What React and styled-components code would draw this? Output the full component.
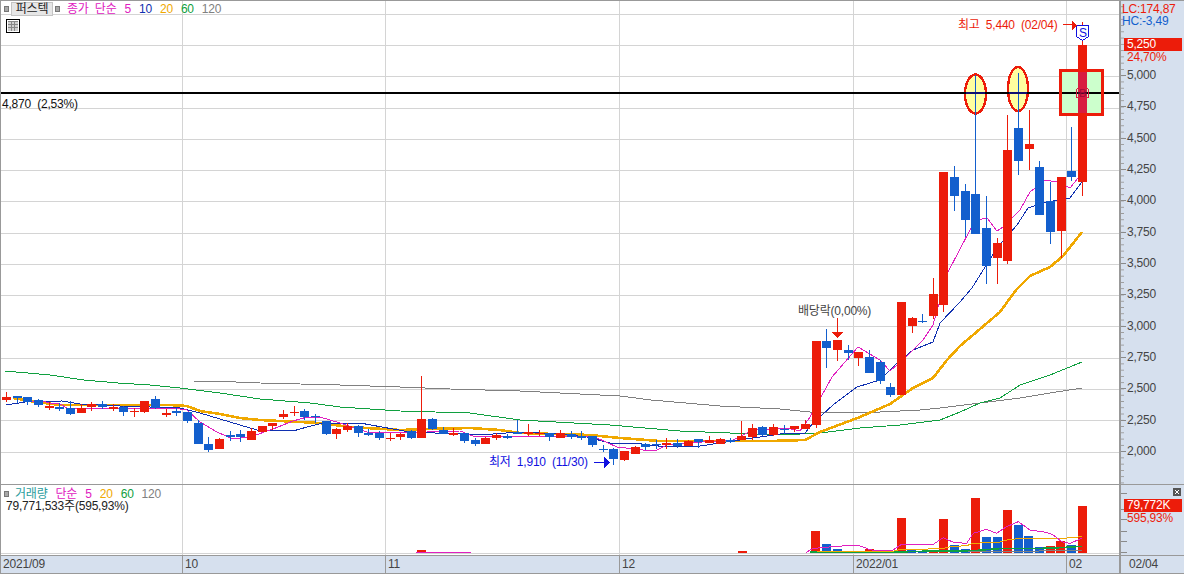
import React from "react"
import styled, { createGlobalStyle } from "styled-components"

const GRAY_LINE = "#999"
const GRID = "#d4d4d4"
const AXIS_BG = "#d6e0ee"
const RED = "#ec1c0a"
const BLUE = "#135fcd"
const MA = { m5: "#e020c0", m10: "#1030b0", m20: "#f0a800", m60: "#10a040", m120: "#808080" }

const candleX = (i) => Math.round(6 + i * 10.653)

// [colour, body top, body bottom, wick top, wick bottom] in page pixels
const candles = [
  ["r", 397, 400, 392, 402], ["b", 396, 398, 396, 403], ["b", 397, 402, 397, 405], ["b", 400, 405, 399, 407],
  ["r", 406, 408, 402, 410], ["b", 407, 409, 403, 411], ["b", 408, 414, 401, 415], ["r", 408, 413, 404, 413],
  ["r", 404, 407, 402, 411], ["b", 404, 407, 401, 409], ["r", 407, 409, 404, 411], ["b", 407, 412, 406, 416],
  ["r", 411, 412, 408, 417], ["r", 401, 412, 401, 413], ["b", 399, 408, 396, 409], ["r", 413, 415, 409, 417],
  ["b", 411, 413, 408, 416], ["b", 412, 421, 412, 423], ["b", 423, 444, 420, 444], ["b", 444, 450, 437, 452],
  ["r", 439, 449, 438, 449], ["b", 435, 437, 431, 441], ["b", 434, 437, 430, 442], ["r", 431, 440, 428, 440],
  ["r", 426, 432, 426, 432], ["r", 423, 426, 423, 430], ["r", 414, 417, 410, 419], ["r", 412, 413, 406, 416],
  ["b", 411, 417, 409, 420], ["b", 416, 417, 414, 423], ["b", 421, 434, 421, 435], ["r", 429, 434, 428, 439],
  ["r", 426, 430, 423, 432], ["b", 426, 433, 425, 437], ["b", 433, 435, 429, 436], ["b", 433, 438, 431, 440],
  ["r", 438, 439, 433, 441], ["r", 434, 437, 433, 440], ["b", 431, 438, 430, 439], ["r", 419, 438, 376, 438],
  ["b", 419, 429, 418, 430], ["b", 430, 434, 427, 434], ["r", 433, 435, 428, 436], ["b", 433, 441, 433, 443],
  ["b", 440, 444, 438, 446], ["r", 438, 444, 437, 444], ["r", 435, 438, 433, 440], ["b", 436, 438, 434, 439],
  ["b", 432, 434, 420, 434], ["r", 432, 434, 424, 436], ["r", 433, 434, 430, 436], ["b", 433, 437, 433, 441],
  ["r", 433, 438, 430, 438], ["b", 434, 437, 431, 439], ["b", 436, 438, 431, 440], ["b", 436, 445, 436, 447],
  ["b", 449, 450, 445, 452], ["b", 449, 459, 448, 465], ["r", 451, 460, 451, 461], ["r", 447, 454, 446, 454],
  ["b", 444, 447, 443, 450], ["b", 444, 445, 440, 449], ["r", 443, 445, 438, 449], ["b", 443, 446, 439, 448],
  ["r", 441, 446, 440, 446], ["b", 439, 442, 439, 448], ["r", 440, 443, 436, 443], ["r", 439, 444, 438, 444],
  ["b", 440, 442, 438, 443], ["r", 436, 440, 421, 440], ["r", 428, 437, 424, 440], ["b", 427, 435, 426, 436],
  ["r", 427, 435, 424, 436], ["b", 429, 430, 425, 434], ["r", 426, 429, 426, 432], ["r", 424, 429, 420, 429],
  ["r", 341, 425, 341, 428], ["b", 341, 348, 329, 368], ["r", 340, 350, 340, 361], ["b", 350, 353, 345, 360],
  ["r", 352, 358, 352, 366], ["b", 357, 373, 350, 373], ["b", 362, 381, 360, 384], ["b", 387, 395, 383, 397],
  ["r", 302, 395, 302, 395], ["r", 318, 326, 317, 333], ["b", 321, 322, 314, 323], ["r", 294, 316, 278, 319],
  ["r", 172, 305, 172, 312], ["b", 177, 196, 166, 211], ["b", 191, 220, 184, 237], ["b", 194, 234, 75, 234],
  ["b", 228, 266, 196, 284], ["r", 243, 258, 238, 284], ["r", 150, 261, 115, 264], ["b", 128, 161, 73, 175],
  ["r", 144, 149, 110, 170], ["b", 167, 215, 161, 215], ["b", 201, 232, 182, 244], ["r", 177, 231, 177, 258],
  ["b", 171, 177, 127, 181], ["r", 45, 182, 22, 196],
]

const line120 = "193,381 236,382 260,383 300,384 340,385 400,387 450,389 520,391 560,393 620,396 651,400 720,406 780,409 810,412 880,412 920,410 940,408 980,403 1020,398 1050,393 1082,388"
const line60 = "5,371 50,375 84,380 118,383 150,385 180,388 220,393 260,399 310,403 340,407 400,411 470,413 520,420 610,425 680,431 730,433 780,435 820,433 860,428 900,425 940,420 960,412 980,403 1000,398 1020,385 1050,375 1082,362"
const line20 = "13,398 30,401 60,405 100,405 170,405 187,406 200,411 220,414 240,418 260,420 320,423 350,427 400,430 430,429 470,428 500,430 520,433 590,435 620,438 660,441 720,441 770,441 805,440 820,432 860,417 890,404 913,388 933,378 947,360 960,346 980,329 1000,312 1016,290 1030,276 1050,267 1063,256 1082,232"
const line10 = "6,405 25,402 62,401 80,404 120,406 180,408 200,413 220,419 240,425 257,430 293,431 307,427 323,423 360,423 393,429 410,432 460,434 493,434 520,432 560,434 587,437 610,443 633,443 667,447 700,446 733,441 780,434 805,433 813,423 833,405 857,387 880,380 895,365 913,350 933,342 940,323 960,302 972,288 997,248 1017,225 1028,208 1047,202 1070,198 1082,182"
const line5 = "32,401 42,401 50,403 60,404 67,408 107,408 180,409 187,410 200,422 217,432 233,439 250,437 273,429 293,421 307,417 320,417 340,423 367,432 393,433 427,432 460,431 473,436 520,436 590,436 597,438 617,447 643,450 657,450 667,445 687,443 733,440 753,430 787,428 800,431 810,417 832,377 858,347 880,360 890,371 897,365 907,356 923,340 933,325 948,272 970,230 977,220 987,218 997,231 1003,227 1020,210 1030,192 1045,180 1057,182 1070,188 1082,173"

const gridRows = [14, 45, 76, 108, 139, 170, 201, 233, 264, 295, 326, 358, 389, 420, 452]
const gridCols = [182, 385, 619, 853, 1066]

// left edge, top of bar; baseline 553
const volumes = [
  ["r", 2, 553], ["r", 417, 550], ["r", 738, 551], ["r", 811, 531], ["b", 822, 544], ["b", 833, 549], ["r", 865, 549],
  ["r", 897, 518], ["b", 907, 550], ["b", 918, 552], ["r", 929, 550], ["r", 939, 519], ["b", 950, 545], ["b", 961, 549],
  ["r", 971, 498], ["b", 982, 537], ["b", 993, 537], ["r", 1003, 510], ["b", 1014, 525], ["b", 1024, 536],
  ["b", 1035, 547], ["r", 1046, 546], ["r", 1056, 541], ["b", 1067, 545], ["r", 1078, 506],
]

const volZoom = (pts) => pts.map(([x, y]) => `${800 + x / 3},${480 + y / 3}`).join(" ")
const volM5 = volZoom([[18, 218], [35, 207], [60, 203], [125, 198], [175, 196], [205, 207], [225, 212], [275, 213], [305, 193], [400, 193], [430, 173], [460, 187], [500, 190], [520, 160], [560, 148], [590, 160], [620, 140], [655, 125], [690, 150], [740, 157], [760, 165], [785, 185], [810, 190], [845, 175]])
const volM20 = volZoom([[50, 216], [280, 214], [300, 208], [380, 208], [390, 205], [430, 205], [450, 200], [500, 197], [520, 190], [600, 186], [620, 180], [660, 175], [720, 177], [790, 175], [845, 170]])
const volM60 = volZoom([[30, 216], [290, 216], [400, 213], [520, 212], [600, 206], [700, 206], [780, 203], [845, 199]])
const volM120 = volZoom([[300, 216], [600, 214], [845, 212]])

const priceLabels = ["5,000", "4,750", "4,500", "4,250", "4,000", "3,750", "3,500", "3,250", "3,000", "2,750", "2,500", "2,250", "2,000"]
const volTicks = [8, 24, 34, 46, 56, 67]
const months = [
  { label: "2021/09", width: 181 },
  { label: "10", width: 203 },
  { label: "11", width: 234 },
  { label: "12", width: 234 },
  { label: "2022/01", width: 213 },
  { label: "02", width: 53 },
]

function GridLines({ rows, height }) {
  return (
    <g stroke={GRID}>
      {rows.map((y) => <line key={y} x1="1" x2="1119" y1={y + 0.5} y2={y + 0.5} />)}
      {gridCols.map((x) => <line key={x} x1={x + 0.5} x2={x + 0.5} y1="0" y2={height} />)}
    </g>
  )
}

function Candle({ index, data }) {
  const [kind, top, bottom, wickTop, wickBottom] = data
  const x = candleX(index)
  const fill = kind === "r" ? RED : BLUE
  return (
    <g>
      <rect x={x} y={wickTop} width="1" height={wickBottom - wickTop} fill={fill} />
      <rect x={x - 4} y={top} width="9" height={Math.max(bottom - top, 1)} fill={fill} />
    </g>
  )
}

function PriceChart() {
  return (
    <ChartSvg viewBox="1 1 1118 483" width="1118" height="483">
      <GridLines rows={gridRows} height={484} />
      <rect x="1060" y="70" width="43" height="45" fill="#ccffcc" />
      <polyline points={line120} fill="none" stroke={MA.m120} />
      <polyline points={line60} fill="none" stroke={MA.m60} />
      <polyline points={line20} fill="none" stroke={MA.m20} strokeWidth="2.6" />
      <polyline points={line10} fill="none" stroke={MA.m10} />
      <polyline points={line5} fill="none" stroke={MA.m5} />
      <ellipse cx="975.5" cy="94" rx="10.5" ry="19.5" fill="#ffff9f" stroke={RED} strokeWidth="2.4" />
      <ellipse cx="1018" cy="89" rx="10" ry="22" fill="#ffff9f" stroke={RED} strokeWidth="2.4" />
      {candles.map((c, i) => <Candle key={i} index={i} data={c} />)}

      <rect x="1078" y="71" width="9" height="43" fill="#d81c40" />
      <rect x="1" y="92" width="1118" height="2" fill="#000" />
      <rect x="966" y="92" width="19" height="2" fill="#101070" />
      <rect x="1009" y="92" width="18" height="2" fill="#101070" />
      <rect x="1078" y="92" width="9" height="2" fill="#50082a" />
      <rect x="1060.5" y="70.5" width="42" height="44" fill="none" stroke={RED} strokeWidth="3" />

      <path d="M1076.5 27.5V36.5L1082.5 40.5L1088.5 36.5V25.5H1076.5Z" fill="#fff" stroke="#1010e0" />
      <ChartText x="1079" y="37" fill="#1010e0">S</ChartText>
      <path d="M1076.5 97.5V89.5L1082.5 84.5L1088.5 89.5V97.5Z" fill="none" stroke="#d81c40" />
      <MarkerText x="1079" y="97" fill="#a00838">B</MarkerText>

      <ChartText x="958" y="29" fill={RED}>최고 5,440 (02/04)</ChartText>
      <rect x="1063" y="24" width="10" height="1" fill={RED} />
      <path d="M1072 20V31L1077 25.5Z" fill={RED} />
      <ChartText x="798" y="315" fill="#444">배당락(0,00%)</ChartText>
      <rect x="837" y="318" width="1" height="15" fill={RED} />
      <path d="M832 332H843L837.5 338Z" fill={RED} />
      <ChartText x="489" y="466" fill="#1010e0">최저 1,910 (11/30)</ChartText>
      <rect x="594" y="462" width="11" height="1" fill="#1010e0" />
      <path d="M604 457V468L610 462.5Z" fill="#1010e0" />
      <ChartText x="2" y="108" fill="#111">4,870 (2,53%)</ChartText>
    </ChartSvg>
  )
}

function VolumeChart() {
  return (
    <ChartSvg viewBox="1 485 1118 70" width="1118" height="70">
      <GridLines rows={[]} height={555} />
      {volumes.map(([kind, x, top]) => (
        <rect key={x} x={x} y={top} width={x === 2 ? 4 : 9} height={553 - top} fill={kind === "r" ? RED : BLUE} />
      ))}
      <rect x="416" y="552" width="55" height="1" fill={MA.m5} />
      <polyline points={volM120} fill="none" stroke={MA.m120} />
      <polyline points={volM60} fill="none" stroke={MA.m60} strokeWidth="1.6" />
      <polyline points={volM20} fill="none" stroke={MA.m20} />
      <polyline points={volM5} fill="none" stroke={MA.m5} />
      <rect x="1" y="553" width="1118" height="1" fill={GRID} />
    </ChartSvg>
  )
}

export default function App() {
  return (
    <>
      <GlobalStyle />
      <Frame>
        <PriceRow>
          <ChartArea>
            <Overlay>
              <Legend>
                <Handle />
                <NameButton>퍼스텍</NameButton>
                <Handle />
                <LegendTitle $color={MA.m5} $left={7}>종가 단순</LegendTitle>
                <Value $color={MA.m5}>5</Value>
                <Value $color={MA.m10}>10</Value>
                <Value $color={MA.m20}>20</Value>
                <Value $color={MA.m60}>60</Value>
                <Value $color={MA.m120}>120</Value>
              </Legend>
              <TableIcon>
                <svg width="14" height="14" viewBox="0 0 14 14" shapeRendering="crispEdges">
                  <rect x="0.5" y="0.5" width="13" height="13" fill="#fff" stroke="#000" />
                  <rect x="2" y="2" width="10" height="10" fill="#d0d0d0" />
                  <path d="M2 2.5H12M2 5.5H12M2 8.5H12M5.5 2V12M8.5 2V12" stroke="#888" />
                </svg>
              </TableIcon>
            </Overlay>
            <PriceChart />
          </ChartArea>
          <PriceAxis>
            <AxisNote $color={RED}>LC:174,87</AxisNote>
            <AxisNote $color={BLUE}>HC:-3,49</AxisNote>
            <PriceTag $top={11}>5,250</PriceTag>
            <TagPercent $height={9}>24,70%</TagPercent>
            {priceLabels.map((p) => <ScaleLabel key={p}>{p}</ScaleLabel>)}
          </PriceAxis>
        </PriceRow>
        <VolumeRow>
          <ChartArea>
            <Overlay>
              <VolumeLegend>
                <Handle />
                <LegendTitle $color="#2a9d9d" $left={6}>거래량</LegendTitle>
                <LegendTitle $color={MA.m5} $left={8}>단순</LegendTitle>
                <Value $color={MA.m5}>5</Value>
                <Value $color={MA.m20}>20</Value>
                <Value $color={MA.m60}>60</Value>
                <Value $color={MA.m120}>120</Value>
              </VolumeLegend>
              <VolumeInfo>79,771,533주(595,93%)</VolumeInfo>
            </Overlay>
            <VolumeChart />
          </ChartArea>
          <VolumeAxis>
            <CloseBox>
              <svg width="8" height="8" viewBox="0 0 8 8" shapeRendering="crispEdges">
                <rect width="8" height="8" fill="#555" />
                <path d="M2 2L6 6M6 2L2 6" stroke="#fff" />
              </svg>
            </CloseBox>
            <PriceTag $top={14}>79,772K</PriceTag>
            <TagPercent>595,93%</TagPercent>
          </VolumeAxis>
        </VolumeRow>
        <TimeRow>
          {months.map((m, i) => (
            <TimeCell key={m.label} $width={m.width} $first={i === 0}>{m.label}</TimeCell>
          ))}
          <TimeEnd>02/04</TimeEnd>
        </TimeRow>
      </Frame>
    </>
  )
}

const GlobalStyle = createGlobalStyle`
  html, body {
    margin: 0;
    padding: 0;
    background: #fff;
  }
  body {
    font-family: "Liberation Sans", "Noto Sans CJK KR", sans-serif;
    font-size: 12px;
    letter-spacing: -0.2px;
    word-spacing: 3px;
  }
`

const Frame = styled.div`
  width: 1184px;
  height: 574px;
  box-sizing: border-box;
  border-top: 1px solid ${GRAY_LINE};
  border-left: 1px solid ${GRAY_LINE};
  display: flex;
  flex-direction: column;
  overflow: hidden;
`

const PriceRow = styled.div`
  display: flex;
  height: 483px;
  flex: none;
  border-bottom: 1px solid ${GRAY_LINE};
`

const VolumeRow = styled.div`
  display: flex;
  height: 70px;
  flex: none;
  border-bottom: 1px solid ${GRAY_LINE};
`

const ChartArea = styled.div`
  position: relative;
  width: 1118px;
  flex: none;
  overflow: hidden;
`

const ChartSvg = styled.svg`
  display: block;
  shape-rendering: crispEdges;
`

const ChartText = styled.text`
  font-size: 12px;
  shape-rendering: auto;
`

const MarkerText = styled(ChartText)`
  font-size: 11px;
`

const Overlay = styled.div`
  position: absolute;
  left: 0;
  top: 0;
  z-index: 1;
`

const Legend = styled.div`
  display: flex;
  align-items: center;
  height: 14px;
  margin-top: 1px;
  padding-left: 3px;
`

const VolumeLegend = styled(Legend)`
  margin-top: 3px;
  height: 12px;
`

const Handle = styled.span`
  flex: none;
  background: #a8a8a8;
  border: 1px solid #777;
  box-sizing: content-box;
  width: 3px;
  height: 4px;
`

const NameButton = styled.span`
  box-sizing: border-box;
  width: 42px;
  height: 14px;
  margin: 0 2px;
  flex: none;
  text-align: center;
  line-height: 13px;
  color: #222;
  background: #e6e6e6;
  border: 1px solid #c4c4c4;
`

const LegendTitle = styled.span`
  color: ${(p) => p.$color};
  margin-left: ${(p) => p.$left}px;
  line-height: 12px;
`

const Value = styled.span`
  color: ${(p) => p.$color};
  margin-left: 8px;
  line-height: 12px;
`

const TableIcon = styled.div`
  margin: 3px 0 0 5px;
  height: 14px;
  svg {
    display: block;
  }
`

const VolumeInfo = styled.div`
  padding-left: 5px;
  line-height: 13px;
  color: #222;
`

const PriceAxis = styled.div`
  box-sizing: border-box;
  width: 65px;
  flex: none;
  padding-top: 2px;
  background-color: ${AXIS_BG};
  border-left: 2px solid ${GRAY_LINE};
  background-image: linear-gradient(#9a9a9a 1px, transparent 1px);
  background-size: 3px 6.27px;
  background-repeat: repeat-y;
  background-position: 0 5.3px;
`

const AxisNote = styled.div`
  height: 12px;
  line-height: 12px;
  padding-left: 1px;
  color: ${(p) => p.$color};
  overflow: hidden;
  white-space: nowrap;
`

const PriceTag = styled.div`
  height: 13px;
  margin: ${(p) => p.$top}px 2px 0 3px;
  padding-left: 3px;
  line-height: 13px;
  color: #fff;
  background: ${RED};
`

const TagPercent = styled.div`
  height: ${(p) => p.$height || 12}px;
  line-height: 12px;
  padding-left: 6px;
  color: ${RED};
`

const ScaleLabel = styled.div`
  position: relative;
  height: 31.35px;
  line-height: 31.35px;
  padding-left: 6px;
  color: #444;
  &::before {
    content: "";
    position: absolute;
    left: 0;
    top: 15px;
    width: 5px;
    height: 1px;
    background: #8a8a8a;
  }
`

const VolumeAxis = styled.div`
  position: relative;
  box-sizing: border-box;
  width: 65px;
  flex: none;
  background: ${volTicks.map((y) => `linear-gradient(#8a8a8a, #8a8a8a) 0 ${y}px / 6px 1px no-repeat`).join(", ")}, ${AXIS_BG};
  border-left: 2px solid ${GRAY_LINE};
`

const CloseBox = styled.div`
  position: absolute;
  right: 3px;
  top: 3px;
  height: 8px;
  svg {
    display: block;
  }
`

const TimeRow = styled.div`
  display: flex;
  flex: 1;
  background: ${AXIS_BG};
  border-bottom: 2px solid ${GRAY_LINE};
  color: #444;
  line-height: 17px;
`

const TimeCell = styled.div`
  box-sizing: border-box;
  width: ${(p) => p.$width}px;
  flex: none;
  padding-left: 2px;
  border-left: ${(p) => (p.$first ? "none" : `1px solid ${GRAY_LINE}`)};
`

const TimeEnd = styled.div`
  flex: 1;
  padding-left: 8px;
  border-left: 2px solid ${GRAY_LINE};
`
